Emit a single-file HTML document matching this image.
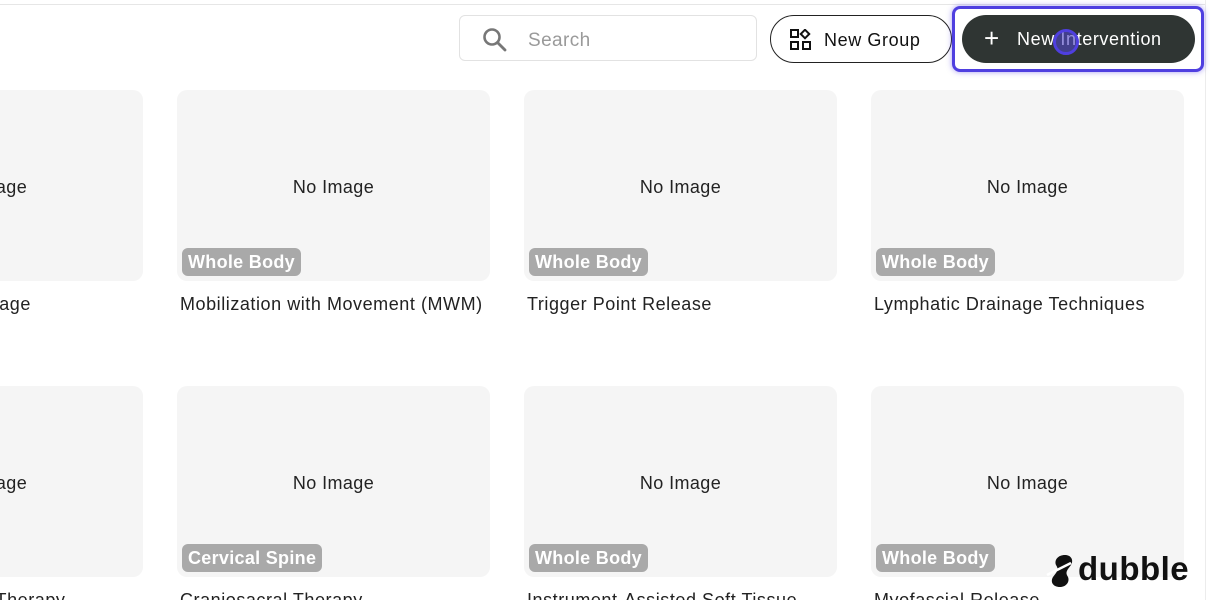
<!DOCTYPE html>
<html style="overflow:hidden"><head><style>
body{margin:0;width:1210px;height:600px;overflow:hidden;background:#fff;font-family:"Liberation Sans",sans-serif;position:relative}
.topline{position:absolute;left:0;top:4px;width:1205px;height:1px;background:#e6e6e6}
.rline{position:absolute;left:1205px;top:0;width:1px;height:600px;background:#ececec}
.search{position:absolute;left:459px;top:15px;width:298px;height:46px;border:1px solid #e2e2e2;border-radius:6px;box-sizing:border-box}
.search span{position:absolute;left:68px;top:14px;font-size:19px;color:#9a9a9a;letter-spacing:0.4px}
.ng{position:absolute;left:770px;top:15px;width:182px;height:48px;border:1px solid #222;border-radius:24px;box-sizing:border-box}
.ng span{position:absolute;left:53px;top:14px;font-size:18px;color:#111;letter-spacing:0.6px}
.focus{position:absolute;left:952px;top:6px;width:252px;height:66px;border:3px solid #4f3fe0;border-radius:8px;box-sizing:border-box;box-shadow:0 0 6px rgba(80,60,230,.5)}
.ni{position:absolute;left:962px;top:15px;width:233px;height:48px;background:#2f3533;border-radius:24px}
.ni span{position:absolute;left:55px;top:14px;font-size:18px;color:#fff;letter-spacing:0.6px}
.ni b{position:absolute;left:22px;top:8px;font-size:26px;color:#fff;font-weight:normal}
.dot{position:absolute;left:1053px;top:29px;width:26px;height:26px;border-radius:50%;border:3px solid #4f3fe0;background:rgba(80,70,200,.6);box-sizing:border-box}
.card{position:absolute;width:313px;height:191px;background:#f5f5f5;border-radius:10px}
.card .t{position:absolute;width:100%;text-align:center;top:87px;font-size:18px;color:#222;letter-spacing:0.4px}
.badge{position:absolute;left:5px;top:158px;height:28px;padding:0 6px;background:#a9a9a9;color:#fff;border-radius:6px;font-size:18px;font-weight:bold;line-height:29px;letter-spacing:0.3px}
.title{position:absolute;font-size:18px;color:#222;white-space:nowrap;letter-spacing:0.55px}
.logo{position:absolute;left:1078px;top:550px;font-size:33px;font-weight:bold;color:#111;letter-spacing:0.5px}
</style></head><body>
<div class="topline"></div><div class="rline"></div>
<div class="search"><svg style="position:absolute;left:22px;top:11px" width="26" height="26" viewBox="0 0 26 26"><circle cx="10" cy="10" r="7.5" fill="none" stroke="#777" stroke-width="2.6"/><line x1="15.5" y1="15.5" x2="23" y2="23" stroke="#777" stroke-width="2.8" stroke-linecap="round"/></svg><span>Search</span></div>
<div class="ng"><svg style="position:absolute;left:19px;top:13px" width="22" height="22" viewBox="0 0 22 22" fill="none" stroke="#111" stroke-width="2"><rect x="1" y="1" width="7" height="7"/><rect x="1" y="13" width="7" height="7"/><rect x="13" y="13" width="7" height="7"/><rect x="12" y="2" width="6" height="6" transform="rotate(45 15 5)"/></svg><span>New Group</span></div>
<div class="focus"></div>
<div class="ni"><b>+</b><span>New Intervention</span></div>
<div class="dot"></div>

<div class="card" style="left:-170px;top:90px"><div class="t">No Image</div></div>
<div class="card" style="left:177px;top:90px"><div class="t">No Image</div><div class="badge">Whole Body</div></div>
<div class="card" style="left:524px;top:90px"><div class="t">No Image</div><div class="badge">Whole Body</div></div>
<div class="card" style="left:871px;top:90px"><div class="t">No Image</div><div class="badge">Whole Body</div></div>
<div class="title" style="left:-46px;top:294px">Massage</div>
<div class="title" style="left:180px;top:294px">Mobilization with Movement (MWM)</div>
<div class="title" style="left:527px;top:294px">Trigger Point Release</div>
<div class="title" style="left:874px;top:294px">Lymphatic Drainage Techniques</div>

<div class="card" style="left:-170px;top:386px"><div class="t">No Image</div></div>
<div class="card" style="left:177px;top:386px"><div class="t">No Image</div><div class="badge">Cervical Spine</div></div>
<div class="card" style="left:524px;top:386px"><div class="t">No Image</div><div class="badge">Whole Body</div></div>
<div class="card" style="left:871px;top:386px"><div class="t">No Image</div><div class="badge">Whole Body</div></div>
<div class="title" style="left:-72px;top:590px">Manual Therapy</div>
<div class="title" style="left:180px;top:590px">Craniosacral Therapy</div>
<div class="title" style="left:527px;top:590px">Instrument-Assisted Soft Tissue</div>
<div class="title" style="left:874px;top:590px">Myofascial Release</div>

<svg style="position:absolute;left:1043px;top:553px" width="32" height="36" viewBox="0 0 32 36"><path d="M22 2c6 0 9 5 6 10l-3 4c-2 3-2 5 0 8 2 5-2 10-8 10-7 0-10-5-7-10l3-4c2-3 2-5 0-8C11 7 15 2 22 2z" fill="#111"/><path d="M4 22 L28 10" stroke="#fff" stroke-width="2.5"/></svg>
<div class="logo">dubble</div>
</body></html>
